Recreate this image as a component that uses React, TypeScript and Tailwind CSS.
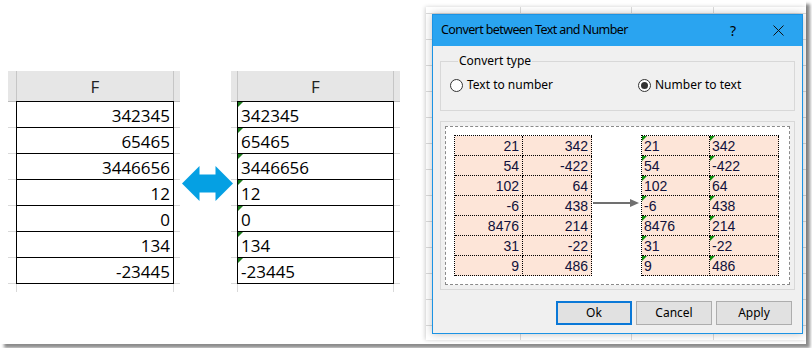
import React from 'react';

const leftValues = ['342345', '65465', '3446656', '12', '0', '134', '-23445'];

const previewRows = [
    ['21', '342'],
    ['54', '-422'],
    ['102', '64'],
    ['-6', '438'],
    ['8476', '214'],
    ['31', '-22'],
    ['9', '486'],
];

// backdrop sheet behind the dialog: faint gridlines
const sheetBg =
    '[background-image:linear-gradient(to_right,transparent_94px,#dadada_94px_95px,transparent_95px_205px,#dadada_205px_206px,transparent_206px_287px,#dadada_287px_288px,transparent_288px),repeating-linear-gradient(to_bottom,transparent_0_6px,#dadada_6px_7px,transparent_7px_26px)]';

interface SheetColumnProps {
    values: string[];
    asText: boolean;
    leftStub: string;
    rightStub: string;
    cellWidth: string;
}

function SheetColumn({ values, asText, leftStub, rightStub, cellWidth }: SheetColumnProps) {
    return (
        <div className="flex flex-col font-['Open_Sans',sans-serif] text-[17px] text-black">
            <div className="flex h-[30px] bg-[#e6e6e6]">
                <div className={leftStub} />
                <div className={`${cellWidth} border-x border-[#c6c6c6] flex justify-center pt-[3px] text-[#222]`}>F</div>
                <div className={rightStub} />
            </div>
            <div className="flex h-px">
                <div className={`${leftStub} bg-[#bdbdbd]`} />
                <div className={`${cellWidth} bg-black`} />
                <div className={`${rightStub} bg-[#bdbdbd]`} />
            </div>
            {values.map((v) => (
                <div key={v} className="flex h-[26px]">
                    <div className={`${leftStub} border-b border-[#d9d9d9]`} />
                    <div
                        className={`${cellWidth} relative border-x border-b border-black flex items-center leading-none pt-[2px] ${
                            asText ? 'justify-start pl-[3px]' : 'justify-end pr-[3px]'
                        }`}
                    >
                        {asText && (
                            <span className="absolute left-0 top-0 w-0 h-0 border-t-[5px] border-r-[5px] border-t-[#1e7b1e] border-r-transparent" />
                        )}
                        {v}
                    </div>
                    <div className={`${rightStub} border-b border-[#d9d9d9]`} />
                </div>
            ))}
            <div className="flex h-[8px]">
                <div className={leftStub} />
                <div className={`${cellWidth} border-x border-[#d9d9d9]`} />
                <div className={rightStub} />
            </div>
        </div>
    );
}

function DoubleArrow() {
    return (
        <svg width="51" height="37" viewBox="0 0 51 37" className="shrink-0">
            <polygon
                points="0,18.5 17.5,1 17.5,9.5 33.5,9.5 33.5,1 51,18.5 33.5,36 33.5,27.5 17.5,27.5 17.5,36"
                fill="#05a0e3"
            />
        </svg>
    );
}

function PreviewTable({ asText }: { asText: boolean }) {
    return (
        <div className="flex flex-col w-[138px] border-t border-l border-dotted border-black font-['Liberation_Sans',Arial,sans-serif] text-[14px] text-[#10103a] leading-none">
            {previewRows.map((row, i) => (
                <div key={i} className="flex h-[20px]">
                    {row.map((v, j) => (
                        <div
                            key={j}
                            className={`${j === 0 ? 'w-[68px]' : 'w-[69px]'} relative bg-[#fde5d8] border-r border-b border-dotted border-black flex items-center pt-[1px] ${
                                asText ? 'justify-start pl-[2px]' : 'justify-end pr-[3px]'
                            }`}
                        >
                            {asText && (
                                <span className="absolute left-0 top-0 w-0 h-0 border-t-[5px] border-r-[5px] border-t-[#0a8a0a] border-r-transparent" />
                            )}
                            {v}
                        </div>
                    ))}
                </div>
            ))}
        </div>
    );
}

function Radio({ checked, label }: { checked: boolean; label: string }) {
    return (
        <label className="flex items-center gap-[4px]">
            <span className="w-[13px] h-[13px] rounded-full border border-[#333] bg-white flex items-center justify-center">
                {checked && <span className="w-[7px] h-[7px] rounded-full bg-[#333]" />}
            </span>
            <span>{label}</span>
        </label>
    );
}

function Dialog() {
    return (
        <div className="ml-[6px] mt-[7px] w-[371px] h-[320px] border border-[#1b93e4] bg-[#f0f0f0] flex flex-col font-['Noto_Sans',sans-serif] text-[12px] text-black shadow-[0_0_8px_rgba(0,0,0,0.25)]">
            <div className="h-[31px] shrink-0 bg-[#2aa4f0] flex items-center pl-[8px] text-[12.5px]">
                <span className="flex-1 tracking-[-0.6px]">Convert between Text and Number</span>
                <span className="w-[20px] text-center mr-[30px] text-[14px]">?</span>
                <svg width="11" height="11" viewBox="0 0 11 11" className="mr-[18px]">
                    <path d="M0.5 0.5 L10.5 10.5 M10.5 0.5 L0.5 10.5" stroke="#111" strokeWidth="1" />
                </svg>
            </div>

            <fieldset className="mx-[7px] mt-[7px] h-[58px] border border-[#d8d8d8] px-[9px]">
                <legend className="ml-[8px] px-[1px] leading-[16px]">Convert type</legend>
                <div className="flex items-center mt-[7px]">
                    <div className="w-[188px]">
                        <Radio checked={false} label="Text to number" />
                    </div>
                    <Radio checked={true} label="Number to text" />
                </div>
            </fieldset>

            <div className="mx-[7px] mt-[10px] h-[169px] shrink-0 border border-[#d8d8d8] p-[4px]">
                <div className="h-full border border-dashed border-[#8a8a8a] bg-white flex items-start pl-[8px] pt-[8px]">
                    <PreviewTable asText={false} />
                    <svg width="49" height="10" viewBox="0 0 49 10" className="mt-[63px] shrink-0">
                        <path d="M1 5 H40" stroke="#707070" strokeWidth="2" />
                        <polygon points="38,1 47,5 38,9" fill="#707070" />
                    </svg>
                    <PreviewTable asText={true} />
                </div>
            </div>

            <div className="flex justify-end gap-[4px] pr-[10px] mt-[11px]">
                <button className="w-[76px] h-[24px] border-2 border-[#0a78d7] bg-[#e1e1e1]">Ok</button>
                <button className="w-[76px] h-[24px] border border-[#adadad] bg-[#e1e1e1]">Cancel</button>
                <button className="w-[76px] h-[24px] border border-[#adadad] bg-[#e1e1e1]">Apply</button>
            </div>
        </div>
    );
}

export default function App() {
    return (
        <div className="w-[812px] h-[348px] bg-white overflow-hidden">
            <div className="w-[806px] h-[344px] bg-white shadow-[4px_4px_3px_rgba(0,0,0,0.45)] flex">
                <div className="w-[426px] shrink-0 flex items-start pt-[71px] pl-[8px]">
                    <SheetColumn values={leftValues} asText={false} leftStub="w-[8px]" rightStub="w-[6px]" cellWidth="w-[158px]" />
                    <div className="ml-[2px] mr-[-2px] mt-[94px]">
                        <DoubleArrow />
                    </div>
                    <SheetColumn values={leftValues} asText={true} leftStub="w-[6px]" rightStub="w-[6px]" cellWidth="w-[157px]" />
                </div>
                <div className={`mt-[7px] w-[380px] h-[333px] bg-white ${sheetBg} shadow-[-1px_0_4px_rgba(0,0,0,0.18)]`}>
                    <Dialog />
                </div>
            </div>
        </div>
    );
}
